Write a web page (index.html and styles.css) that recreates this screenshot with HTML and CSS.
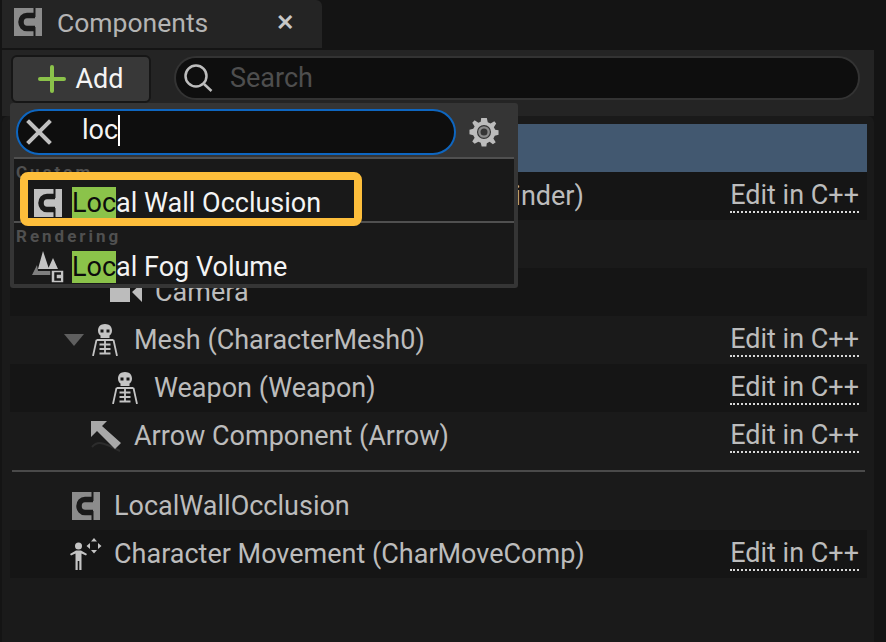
FILE: index.html
```html
<!DOCTYPE html>
<html lang="en">
<head>
    <meta charset="UTF-8">
    <title>Components</title>
    <link rel="stylesheet" href="styles.css">
</head>
<body>
    <svg class="defs" width="0" height="0">
        <defs>
            <symbol id="cpp" viewBox="0 0 28 28">
                <path class="cpp-box" d="M0 0H28V28H0Z"/>
                <path class="cpp-c" d="M21 7.5H13C9.500 7.500 7 10.500 7 14C7 17.500 9.500 20.500 13 20.500H21"/>
                <path class="cpp-slit" d="M20.500 0V9M20.500 19V28"/>
            </symbol>
            <symbol id="skeleton" viewBox="0 0 26 32">
                <path class="bone-fill" fill-rule="evenodd" d="M13 0C8.500 0 6 2.800 6 6.500C6 9 7 10.500 8.500 11.500V14H17.500V11.500C19 10.500 20 9 20 6.500C20 2.800 17.500 0 13 0ZM8.500 5.500H11.500V8.500H8.500ZM14.500 5.500H17.500V8.500H14.500Z"/>
                <path class="bone-line" d="M4.500 16H21.500M4.500 16L1 32M21.500 16L25 32M7.500 20.500H18.500M7.500 25H18.500M7.500 29.500H18.500M13 16V30"/>
            </symbol>
        </defs>
    </svg>

    <div class="panel">
        <div class="tab-strip">
            <div class="tab">
                <svg class="icon-c dim"><use href="#cpp"/></svg>
                <span class="tab-title">Components</span>
                <span class="tab-close">✕</span>
            </div>
        </div>

        <div class="toolbar">
            <button class="add-btn">
                <svg class="plus" viewBox="0 0 28 28"><path d="M2 14H26M14 2V26"/></svg>
                <span>Add</span>
            </button>
            <div class="search">
                <svg class="search-icon" viewBox="0 0 30 30"><circle cx="13" cy="13" r="10.500"/><path d="M21 21L28.500 28"/></svg>
                <span>Search</span>
            </div>
        </div>

        <div class="tree">
            <div class="row selected"></div>
            <div class="row dark"><span class="row-main lvl-plain"><span class="row-label">Capsule Component (CollisionCylinder)</span></span><a class="edit">Edit in C++</a></div>
            <div class="row"></div>
            <div class="row dark">
                <span class="lvl-2 row-main">
                    <svg class="icon-camera" viewBox="0 0 32 20"><path d="M0 1H20V20H0ZM22 10L32 1V20Z"/></svg>
                    <span class="row-label">Camera</span>
                </span>
            </div>
            <div class="row">
                <span class="lvl-0 row-main">
                    <span class="caret"></span>
                    <svg class="icon-skel"><use href="#skeleton"/></svg>
                    <span class="row-label">Mesh (CharacterMesh0)</span>
                </span>
                <a class="edit">Edit in C++</a>
            </div>
            <div class="row dark">
                <span class="lvl-2 row-main">
                    <svg class="icon-skel"><use href="#skeleton"/></svg>
                    <span class="row-label">Weapon (Weapon)</span>
                </span>
                <a class="edit">Edit in C++</a>
            </div>
            <div class="row">
                <span class="lvl-1 row-main">
                    <svg class="icon-arrow" viewBox="0 0 32 32">
                        <path class="arrow-shadow" d="M2 27C8 20 14 24 20 26L30 31"/>
                        <path d="M1 1H17L12 6L31 23L25 29L7 11L1 17Z"/>
                    </svg>
                    <span class="row-label">Arrow Component (Arrow)</span>
                </span>
                <a class="edit">Edit in C++</a>
            </div>
            <div class="tree-sep"></div>
            <div class="row">
                <span class="lvl-3 row-main">
                    <svg class="icon-c dim"><use href="#cpp"/></svg>
                    <span class="row-label">LocalWallOcclusion</span>
                </span>
            </div>
            <div class="row dark">
                <span class="lvl-4 row-main">
                    <svg class="icon-move" viewBox="0 0 32 32">
                        <circle cx="8.500" cy="8" r="3.500"/>
                        <path d="M0 16L6 12.500H11L17 16L16 17.500L11.500 15.500V32H9.300V23H7.700V32H5.500V15.500L1 17.500Z"/>
                        <path d="M24 0L27 3.500H21ZM24 15.500L21 12H27ZM16.500 8L20 5V11ZM31.500 8L28 5V11Z"/>
                    </svg>
                    <span class="row-label">Character Movement (CharMoveComp)</span>
                </span>
                <a class="edit">Edit in C++</a>
            </div>
        </div>
    </div>

    <div class="menu">
        <div class="menu-head">
            <div class="menu-search">
                <svg class="clear" viewBox="0 0 26 26"><path d="M3 3L23 23M23 3L3 23"/></svg>
                <span class="menu-query">loc</span>
            </div>
            <svg class="gear" viewBox="0 0 32 32">
                <path fill-rule="evenodd" d="M13 1H19L20 5.500L23 7L27 4.500L29 7L26.500 11L28 13.500L31.500 14V19L27.500 20L26 23L28.500 27L25.500 29L22 26.500L19 28L18.500 31.500H13.500L12.500 27.500L10 26.500L6 28.500L3.500 26L6 22L4.500 19.500L0.500 18.500V13.500L4.500 12.500L6 10L3.500 6L6 3.500L10 6L12.500 5Z M16 8.500A7.500 7.500 0 1 0 16 23.500A7.500 7.500 0 1 0 16 8.500Z"/>
                <circle class="gear-core" cx="16" cy="16" r="5"/>
            </svg>
        </div>
        <div class="menu-body">
            <div class="menu-group">
                <div class="menu-cat">Custom</div>
                <div class="menu-item">
                    <svg class="icon-c"><use href="#cpp"/></svg>
                    <span><mark>Loc</mark>al Wall Occlusion</span>
                </div>
            </div>
            <div class="menu-group">
                <div class="menu-cat">Rendering</div>
                <div class="menu-item">
                    <svg class="icon-fog" viewBox="0 0 32 32">
                        <path class="fog-base" d="M5 14L0 24H19V20H6Z"/>
                        <path class="fog-peaks" d="M11 0L17 18H6ZM21 7L26 18H16Z"/>
                        <path class="fog-badge" d="M19 19H32V32H19Z"/>
                        <path class="fog-c" d="M29 22.500H23.500V28.500H29"/>
                    </svg>
                    <span><mark>Loc</mark>al Fog Volume</span>
                </div>
            </div>
        </div>
        <div class="callout"></div>
    </div>
</body>
</html>
```

FILE: styles.css
```css
* {
    box-sizing: border-box;
}

body {
    margin: 0;
    width: 886px;
    height: 642px;
    overflow: hidden;
    position: relative;
    background-color: #141414;
    font-family: Roboto, "Liberation Sans", sans-serif;
    font-size: 27px;
    color: #bcbcbc;
}

.defs {
    position: absolute;
}

.panel {
    display: flex;
    flex-direction: column;
    height: 100%;
    margin: 0 12px 0 2px;
}

/* tab */
.tab-strip {
    height: 50px;
    flex: none;
}

.tab {
    width: 320px;
    height: 48px;
    display: flex;
    align-items: center;
    padding: 0 0 4px 12px;
    background: #242424;
    border-radius: 0 6px 0 0;
}

.tab-title {
    margin-left: 15px;
    font-size: 26.5px;
    color: #b4b4b4;
}

.tab-close {
    margin-left: 68px;
    font-size: 22px;
    font-weight: 700;
    color: #c8c8c8;
}

.icon-c {
    width: 28px;
    height: 28px;
    flex: none;
    --box: #c0c0c0;
}

.icon-c.dim {
    --box: #8c8c8c;
}

.cpp-box {
    fill: var(--box);
}

.cpp-c {
    fill: none;
    stroke: #1a1a1a;
    stroke-width: 5.500;
}

.cpp-slit {
    stroke: #1a1a1a;
    stroke-width: 2;
}

/* toolbar */
.toolbar {
    height: 66px;
    flex: none;
    padding: 5px 14px 0 9px;
    display: flex;
    align-items: flex-start;
    gap: 23px;
    background: #242424;
}

.add-btn {
    width: 140px;
    height: 48px;
    flex: none;
    display: flex;
    align-items: center;
    justify-content: center;
    gap: 9px;
    padding: 0;
    background: #383838;
    border: 2px solid #161616;
    border-radius: 6px;
    font: inherit;
    color: #f4f4f4;
}

.plus {
    width: 28px;
    height: 28px;
    fill: none;
    stroke: #8bc24a;
    stroke-width: 4;
    stroke-linecap: round;
}

.search {
    flex: 1;
    height: 44px;
    margin-top: 1px;
    display: flex;
    align-items: center;
    gap: 17px;
    padding-left: 7px;
    background: #0e0e0e;
    border: 2px solid #333;
    border-radius: 23px;
    color: #4e4e4e;
}

.search-icon {
    width: 30px;
    height: 30px;
    fill: none;
    stroke: #bdbdbd;
    stroke-width: 2.500;
}

/* component tree */
.tree {
    flex: 1;
    padding: 8px 7px 0 8px;
    background: #1a1a1a;
    border-radius: 6px 6px 0 0;
}

.row {
    height: 48px;
    display: flex;
    align-items: center;
    justify-content: space-between;
    padding-right: 8px;
}

.row.selected {
    background: #425870;
}

.row.dark {
    background: #151515;
}

.row-main {
    display: flex;
    align-items: center;
}

.lvl-0 {
    padding-left: 54px;
}

.lvl-1 {
    padding-left: 80px;
}

.lvl-2 {
    padding-left: 100px;
}

.lvl-3 {
    padding-left: 62px;
}

.lvl-4 {
    padding-left: 60px;
}

.lvl-plain {
    padding-left: 88px;
}

.row-label {
    margin-left: 16px;
    white-space: nowrap;
}

.icon-camera + .row-label {
    margin-left: 13px;
}

.icon-arrow + .row-label,
.icon-move + .row-label {
    margin-left: 12px;
}

.lvl-3 .row-label {
    margin-left: 14px;
}

.lvl-2 .icon-skel {
    margin-left: 2px;
}

.edit {
    color: #bcbcbc;
    padding-bottom: 1px;
    border-bottom: 2px dotted #d8d8d8;
    line-height: 30px;
}

.caret {
    width: 0;
    height: 0;
    margin-right: 8px;
    border-left: 10px solid transparent;
    border-right: 10px solid transparent;
    border-top: 12px solid #5f5f5f;
}

.icon-camera {
    width: 32px;
    height: 20px;
    fill: #bcbcbc;
}

.icon-skel {
    width: 26px;
    height: 32px;
}

.bone-fill {
    fill: #c4c4c4;
}

.bone-line {
    fill: none;
    stroke: #c4c4c4;
    stroke-width: 1.800;
}

.icon-arrow {
    width: 32px;
    height: 32px;
    fill: #a8a8a8;
    filter: blur(0.6px);
}

.arrow-shadow {
    fill: none;
    stroke: #2c2c2c;
    stroke-width: 2;
}

.icon-move {
    width: 32px;
    height: 32px;
    fill: #c4c4c4;
}

.tree-sep {
    height: 2px;
    margin: 10px 2px;
    background: #4a4a4a;
}

/* add component dropdown */
.menu {
    position: absolute;
    left: 10px;
    top: 103px;
    width: 508px;
    height: 185px;
    background: #353535;
    border-radius: 3px;
    padding: 0 4px 4px;
}

.menu-head {
    height: 54px;
    display: flex;
    align-items: center;
    gap: 13px;
    padding: 4px 0 0 2px;
}

.menu-search {
    width: 440px;
    height: 46px;
    flex: none;
    display: flex;
    align-items: center;
    padding-left: 8px;
    background: #0e0e0e;
    border: 2px solid #0e66c0;
    border-radius: 23px;
    color: #f4f4f4;
}

.clear {
    width: 26px;
    height: 26px;
    fill: none;
    stroke: #c0c0c0;
    stroke-width: 4;
    stroke-linecap: square;
}

.menu-query {
    margin: 0 0 3px 30px;
    border-right: 2px solid #fff;
    line-height: 31px;
}

.gear {
    width: 30px;
    height: 30px;
    fill: #bcbcbc;
}

.gear-core {
    fill: none;
    stroke: #8a8a8a;
    stroke-width: 2.500;
}

.menu-body {
    background: #191919;
    height: 127px;
}

.menu-group {
    height: 64px;
    border-top: 2px solid #505050;
    padding-left: 2px;
}

.menu-cat {
    height: 22px;
    padding-top: 4px;
    font-size: 17px;
    line-height: 18px;
    font-weight: 700;
    letter-spacing: 3px;
    color: #505050;
}

.menu-item {
    height: 40px;
    display: flex;
    align-items: center;
    gap: 10px;
    padding: 4px 0 0 18px;
    color: #f4f4f4;
}

mark {
    background: #8bc34a;
    color: #0c0c0c;
}

.icon-fog {
    width: 32px;
    height: 32px;
    margin: 0 -2px;
}

.fog-peaks {
    fill: #c4c4c4;
}

.fog-base {
    fill: #7e7e7e;
}

.fog-badge {
    fill: #c4c4c4;
    stroke: #191919;
    stroke-width: 1.500;
}

.fog-c {
    fill: none;
    stroke: #191919;
    stroke-width: 2.500;
}

/* highlight drawn over the first result */
.callout {
    position: absolute;
    left: 10px;
    top: 69px;
    width: 342px;
    height: 54px;
    border: 8px solid #fdbe3b;
    border-radius: 8px;
}
```
